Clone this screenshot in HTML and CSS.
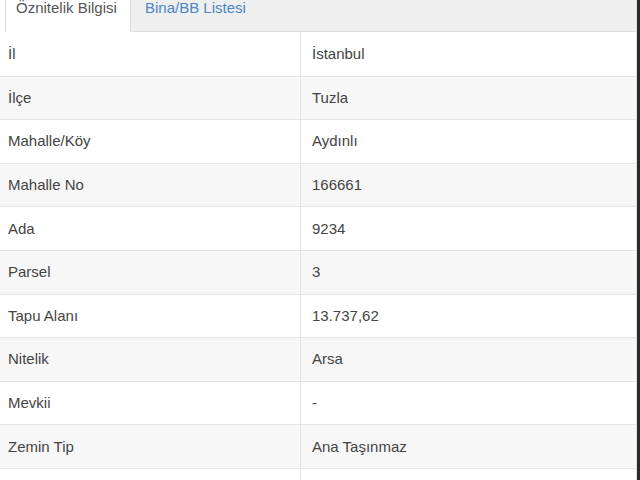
FILE: index.html
```html
<!DOCTYPE html>
<html lang="tr">
<head>
    <meta charset="UTF-8">
    <meta name="viewport" content="width=device-width, initial-scale=1.0">
    <title>Öznitelik Bilgisi</title>
    <link rel="stylesheet" href="styles.css">
</head>
<body>

    <div class="panel">
        <ul class="tabs">
            <li class="tab active">Öznitelik Bilgisi</li>
            <li class="tab rest"><a href="#">Bina/BB Listesi</a></li>
        </ul>

        <table class="info">
            <tbody>
                <tr><td>İl</td><td>İstanbul</td></tr>
                <tr><td>İlçe</td><td>Tuzla</td></tr>
                <tr><td>Mahalle/Köy</td><td>Aydınlı</td></tr>
                <tr><td>Mahalle No</td><td>166661</td></tr>
                <tr><td>Ada</td><td>9234</td></tr>
                <tr><td>Parsel</td><td>3</td></tr>
                <tr><td>Tapu Alanı</td><td>13.737,62</td></tr>
                <tr><td>Nitelik</td><td>Arsa</td></tr>
                <tr><td>Mevkii</td><td>-</td></tr>
                <tr><td>Zemin Tip</td><td>Ana Taşınmaz</td></tr>
                <tr><td>&nbsp;</td><td>&nbsp;</td></tr>
            </tbody>
        </table>
    </div>

</body>
</html>
```

FILE: styles.css
```css
html, body {
    margin: 0;
    height: 100%;
    overflow: hidden;
}

body {
    font-family: 'Liberation Sans', Arial, sans-serif;
    font-size: 15px;
    color: #444;
    background-color: #ffffff;
}

.panel {
    width: 637px;
    height: 480px;
    border-right: 3px solid #2a2a2a;
    overflow: hidden;
}

.tabs {
    display: flex;
    list-style: none;
    margin: 0;
    padding: 0 0 0 5px;
    height: 32px;
}

.tab {
    height: 32px;
    box-sizing: border-box;
    line-height: 16px;
    padding: 0 9px 0 10px;
}

.tab.active {
    background-color: #ffffff;
    border-left: 1px solid #dddddd;
    border-right: 1px solid #dddddd;
    color: #555555;
    width: 126px;
}

.tab.rest {
    flex: 1;
    background-color: #efefef;
    border-bottom: 1px solid #dddddd;
    border-right: 1px solid #e2e2e2;
    border-bottom-left-radius: 3px;
    padding-left: 14px;
}

.tab a {
    color: #4a86c8;
    text-decoration: none;
}

.info {
    width: 637px;
    border-collapse: collapse;
    border-right: 1px solid #e2e2e2;
}

.info td {
    padding: 12px 8px;
    height: 18.6px;
    line-height: 18px;
    box-sizing: content-box;
    border-top: 1px solid #e4e4e4;
    text-align: left;
    vertical-align: middle;
}

.info tr:first-child td {
    border-top: none;
    padding-top: 13px;
}

.info td:first-child {
    width: 284px;
    border-right: 1px solid #e4e4e4;
}

.info td:last-child {
    padding-left: 11px;
}

.info tr:nth-child(even) {
    background-color: #f7f7f7;
}
```
